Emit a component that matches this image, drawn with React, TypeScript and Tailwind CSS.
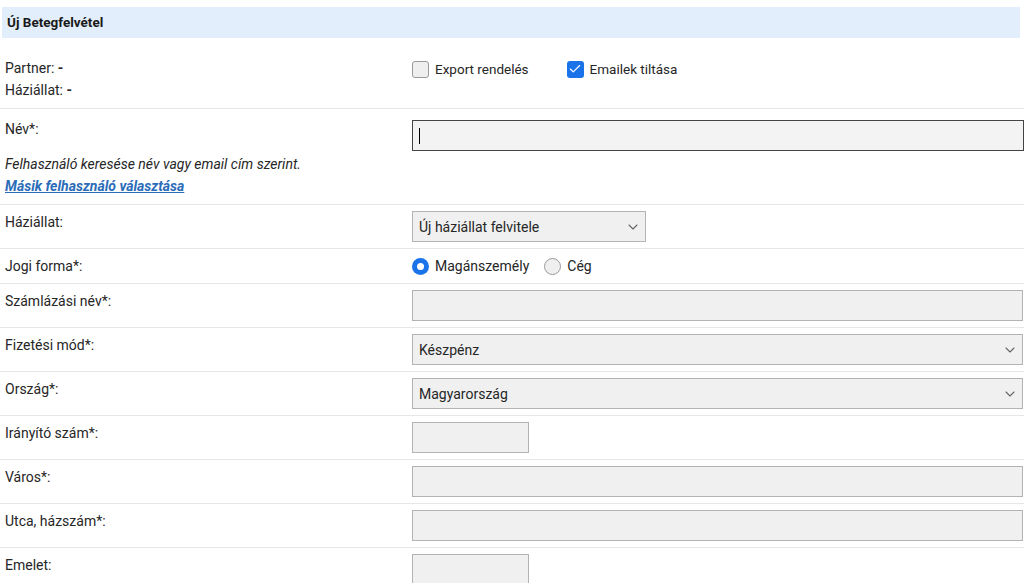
import { ChevronDown, Check } from "lucide-react";

type Field = {
  label: string;
  kind: "input" | "select" | "small";
  value?: string;
};

const fields: Field[] = [
  { label: "Számlázási név*:", kind: "input" },
  { label: "Fizetési mód*:", kind: "select", value: "Készpénz" },
  { label: "Ország*:", kind: "select", value: "Magyarország" },
  { label: "Irányító szám*:", kind: "small" },
  { label: "Város*:", kind: "input" },
  { label: "Utca, házszám*:", kind: "input" },
  { label: "Emelet:", kind: "small" },
];

function Checkbox({ checked, label }: { checked?: boolean; label: string }) {
  return (
    <label className="flex items-center gap-[6px]">
      {checked ? (
        <span className="w-[17px] h-[17px] rounded-[3px] bg-[#1a73e8] flex items-center justify-center">
          <Check size={14} strokeWidth={2} color="#fff" />
        </span>
      ) : (
        <span className="w-[17px] h-[17px] rounded-[3px] border border-[#9a9a9a] bg-[#efefef]" />
      )}
      <span>{label}</span>
    </label>
  );
}

function Radio({ checked, label }: { checked?: boolean; label: string }) {
  return (
    <label className="flex items-center gap-[6px]">
      {checked ? (
        <span className="w-[17px] h-[17px] rounded-full bg-[#1a73e8] flex items-center justify-center">
          <span className="w-[7px] h-[7px] rounded-full bg-white" />
        </span>
      ) : (
        <span className="w-[17px] h-[17px] rounded-full border border-[#9a9a9a] bg-[#efefef]" />
      )}
      <span>{label}</span>
    </label>
  );
}

function Control({ f }: { f: Field }) {
  if (f.kind === "select") {
    return (
      <div className="h-[31px] w-[611px] bg-[#f0f0f0] border border-[#b3b3b3] flex items-center justify-between pl-[6px] pr-[4px]">
        <span>{f.value}</span>
        <ChevronDown size={16} strokeWidth={1.6} color="#666" />
      </div>
    );
  }
  if (f.kind === "small") {
    return <div className="h-[31px] w-[117px] bg-[#f0f0f0] border border-[#b3b3b3]" />;
  }
  return <div className="h-[31px] w-[611px] bg-[#f0f0f0] border border-[#b3b3b3]" />;
}

export default function App() {
  return (
    <div className="font-['Roboto',sans-serif] text-[14px] text-[#262626] bg-white pt-[7px] min-h-screen overflow-hidden">
      <div className="h-[31px] bg-[#e2eefb] ml-[2px] mr-[4px] px-[5px] flex items-center font-bold text-[13.5px] text-[#1a1a1a]">
        Új Betegfelvétel
      </div>

      <div className="grid grid-cols-[412px_1fr] pt-[19px] pb-[7px] leading-[22px]">
        <div className="pl-[5px]">
          <div>Partner: <b>-</b></div>
          <div>Háziállat: <b>-</b></div>
        </div>
        <div className="flex items-start gap-[38px] pt-[1px] text-[13.5px]">
          <Checkbox label="Export rendelés" />
          <Checkbox checked label="Emailek tiltása" />
        </div>
      </div>

      <div className="border-t border-[#e6e6e6] grid grid-cols-[412px_1fr] pb-[7px] leading-[22px]">
        <div className="pl-[5px] pt-[9px]">
          <div>Név*:</div>
          <div className="mt-[13px] italic">Felhasználó keresése név vagy email cím szerint.</div>
          <div className="italic font-bold underline text-[#2b6cb8]">Másik felhasználó választása</div>
        </div>
        <div className="pt-[11px]">
          <div className="h-[31px] w-[612px] bg-[#f3f3f3] border border-[#444] flex items-center pl-[6px]">
            <span className="w-[1px] h-[16px] bg-black" />
          </div>
        </div>
      </div>

      <div className="border-t border-[#e6e6e6] grid grid-cols-[412px_1fr] py-[6px] leading-[22px]">
        <div className="pl-[5px]">Háziállat:</div>
        <div className="h-[31px] w-[234px] bg-[#f0f0f0] border border-[#b3b3b3] flex items-center justify-between pl-[6px] pr-[4px]">
          <span>Új háziállat felvitele</span>
          <ChevronDown size={16} strokeWidth={1.6} color="#666" />
        </div>
      </div>

      <div className="border-t border-[#e6e6e6] grid grid-cols-[412px_1fr] py-[6px] leading-[22px]">
        <div className="pl-[5px]">Jogi forma*:</div>
        <div className="flex items-center gap-[15px] h-[22px]">
          <Radio checked label="Magánszemély" />
          <Radio label="Cég" />
        </div>
      </div>

      {fields.map((f) => (
        <div
          key={f.label}
          className="border-t border-[#e6e6e6] grid grid-cols-[412px_1fr] py-[6px] leading-[22px]"
        >
          <div className="pl-[5px]">{f.label}</div>
          <Control f={f} />
        </div>
      ))}
    </div>
  );
}
